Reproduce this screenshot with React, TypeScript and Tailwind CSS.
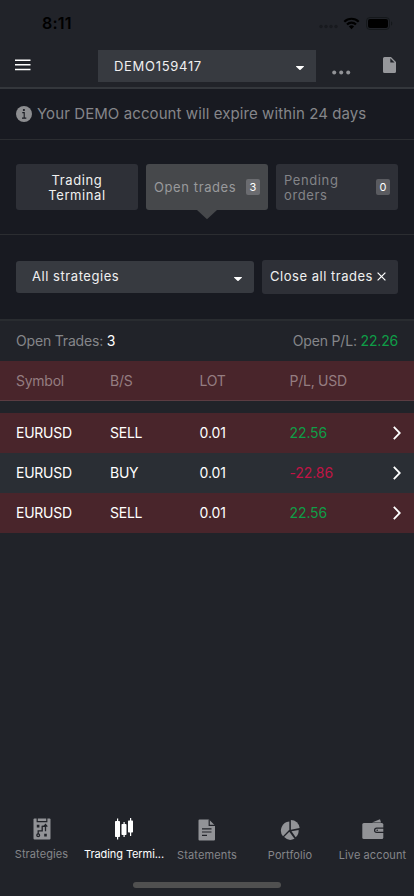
import React from 'react';

interface Trade {
  id: number;
  symbol: string;
  side: 'SELL' | 'BUY';
  lot: string;
  profit: string;
}

const trades: Trade[] = [
  { id: 1, symbol: 'EURUSD', side: 'SELL', lot: '0.01', profit: '22.56' },
  { id: 2, symbol: 'EURUSD', side: 'BUY', lot: '0.01', profit: '-22.86' },
  { id: 3, symbol: 'EURUSD', side: 'SELL', lot: '0.01', profit: '22.56' },
];

const Caret: React.FC = () => (
  <svg width="10" height="6" viewBox="0 0 10 6" fill="#fff">
    <path d="M1.500 1h7c.5 0 .6.500.3.800L5.600 4.700c-.4.400-.8.400-1.200 0L1.200 1.800C.9 1.500 1 1 1.500 1z" />
  </svg>
);

const StatusBar: React.FC = () => (
  <div className="h-[46px] flex items-center text-black">
    <span className="ml-[42px] w-[60px] text-[16px] leading-[46px] font-semibold tracking-[0.2px]">8:11</span>
    <svg className="ml-[217px] mt-[7px]" width="19" height="5" viewBox="0 0 19 5" fill="#181a1e">
      <circle cx="2" cy="2.500" r="1.700" />
      <circle cx="7" cy="2.500" r="1.700" />
      <circle cx="12" cy="2.500" r="1.700" />
      <circle cx="17" cy="2.500" r="1.700" />
    </svg>
    <svg className="ml-[5px]" width="17" height="13" viewBox="0 0 17 13">
      <g fill="none" stroke="#000" strokeWidth="2.200">
        <path d="M1.300 4.700a10.300 10.300 0 0 1 14.400 0" />
        <path d="M4 7.500a6.400 6.400 0 0 1 9 0" />
      </g>
      <path d="M8.500 12.200 5.900 9.600a3.700 3.700 0 0 1 5.200 0z" />
    </svg>
    <svg className="ml-[6px]" width="27" height="13" viewBox="0 0 27 13">
      <rect x=".5" y=".5" width="23" height="12" rx="3.500" fill="none" stroke="#15181b" />
      <rect x="2" y="2" width="20" height="9" rx="2" />
      <path d="M25 4.300c1.700.8 1.700 3.600 0 4.400z" fill="#15181b" />
    </svg>
  </div>
);

const Header: React.FC = () => (
  <div className="h-[43px] flex border-b-2 border-[#34373c]">
    <svg className="ml-[15px] mt-[13px]" width="16" height="12" viewBox="0 0 16 12" stroke="#fff" strokeWidth="1.500">
      <path d="M0 1.200h15.500M0 5.800h15.500M0 10.500h15.500" />
    </svg>
    <div className="ml-[67px] mt-[4px] w-[218px] h-[32px] pl-[16px] pr-[11px] flex items-center justify-between bg-[#373a40] text-[#f0f0f0] text-[13px] tracking-[0.7px]">
      <span className="mt-px">DEMO159417</span>
      <span className="mt-[4px]"><Caret /></span>
    </div>
    <svg className="ml-[16px] mt-[24px]" width="19" height="5" viewBox="0 0 19 5" fill="#929397">
      <circle cx="2.200" cy="2.600" r="2" />
      <circle cx="9.200" cy="2.600" r="2" />
      <circle cx="16.200" cy="2.600" r="2" />
    </svg>
    <svg className="ml-[32px] mt-[11px]" width="13" height="16" viewBox="0 0 13 16">
      <path d="M1.500 0H8l5 5v9.500a1.500 1.500 0 0 1-1.500 1.500h-10A1.500 1.500 0 0 1 0 14.500v-13A1.500 1.500 0 0 1 1.500 0z" fill="#96979b" />
      <path d="M7.300 1.300v4.200h4.300z" fill="#212329" />
    </svg>
  </div>
);

const Tabs: React.FC = () => (
  <div className="h-[95px] pt-[24px] px-[16px] flex gap-[8px] text-[13px] leading-[15px] tracking-[0.6px] border-b border-[#2b2d31]">
    <button className="w-[122px] h-[46px] pt-px rounded-[3px] bg-[#2e3037] text-[#f0f0f0] text-center">
      Trading<br />Terminal
    </button>
    <button className="relative w-[122px] h-[46px] px-[8px] rounded-[3px] bg-[#46484b] text-[#999a9c] flex items-center justify-between">
      <span className="whitespace-nowrap">Open trades</span>
      <span className="w-[14px] h-[16px] rounded-[2px] bg-[#6b6c70] text-white text-[11px] tracking-normal leading-[16px] text-center">3</span>
      <svg className="absolute left-[51px] top-[46px]" width="20" height="10" viewBox="0 0 20 10" fill="#46484b">
        <path d="M0 0h20L10 9.300z" />
      </svg>
    </button>
    <button className="w-[122px] h-[46px] px-[8px] rounded-[3px] bg-[#2e3037] text-[#838488] flex items-center justify-between text-left">
      <span className="mt-px">Pending<br />orders</span>
      <span className="w-[14px] h-[16px] rounded-[2px] bg-[#5a5b60] text-white text-[11px] tracking-normal leading-[16px] text-center">0</span>
    </button>
  </div>
);

const Filters: React.FC = () => (
  <div className="h-[86px] px-[16px] flex items-center gap-[8px] text-[13px] text-[#f0f0f0] border-b-2 border-[#292c30]">
    <div className="w-[238px] h-[32px] pl-[16px] pr-[11px] rounded-[3px] bg-[#373a40] flex items-center justify-between tracking-[0.55px]">
      <span>All strategies</span>
      <span className="mt-[4px]"><Caret /></span>
    </div>
    <button className="w-[136px] h-[34px] pl-[8px] rounded-[3px] bg-[#2e3037] flex items-center whitespace-nowrap tracking-[0.52px]">
      Close all trades
      <svg className="ml-[4px] -mt-px" width="9" height="9" viewBox="0 0 9 9" stroke="#fff" strokeWidth="1.200">
        <path d="M.6.600l7.800 7.800M8.400.6L.6 8.400" />
      </svg>
    </button>
  </div>
);

const TradeRow: React.FC<{ trade: Trade }> = ({ trade }) => (
  <div className={`h-[40px] pl-[16px] flex items-center text-white ${trade.side === 'SELL' ? 'bg-[#49252b]' : 'bg-[#2a2e34]'}`}>
    <span className="w-[94px] tracking-[-0.25px]">{trade.symbol}</span>
    <span className="w-[89.500px] tracking-[-0.25px]">{trade.side}</span>
    <span className="w-[90px]">{trade.lot}</span>
    <span className={`w-[103px] ${trade.profit.startsWith('-') ? 'text-[#c01445]' : 'text-[#0f9d47]'}`}>{trade.profit}</span>
    <svg width="8" height="14" viewBox="0 0 8 14" fill="none" stroke="#fff" strokeWidth="1.800">
      <path d="M.8.800l6 6.200-6 6.200" />
    </svg>
  </div>
);

const navItems = [
  {
    label: 'Strategies',
    box: 'w-[83px] pt-px tracking-[0.1px]',
    icon: (
      <svg width="18" height="22" viewBox="0 0 18 22">
        <rect x=".5" y=".5" width="17" height="21" rx="1" fill="#929397" />
        <path d="M4.200 0v3.700h9.600V0" fill="none" stroke="#212329" strokeWidth="1.200" />
        <g fill="none" stroke="#212329" strokeWidth="1.300">
          <path d="M5.200 16v-3.200h4V8.300h3.600" />
          <path d="M9.200 8.300h3.300v5M10.700 8.700l1.800-2.100 1.800 2.100" />
          <circle cx="5.200" cy="17.200" r="1.400" />
        </g>
        <path d="M3.800 6.800h2.600v2.600H3.800zM11.200 15.800h2.600v2.600h-2.600z" fill="#212329" />
      </svg>
    ),
  },
  {
    label: 'Trading Termi...',
    box: 'w-[82px] pt-px text-white tracking-[-0.08px]',
    icon: (
      <svg width="18" height="22" viewBox="0 0 18 22" fill="#fff">
        <rect y="3" width="5" height="16" rx=".7" />
        <rect x="2" y=".5" width="1.200" height="21" />
        <rect x="6.500" y="6" width="5" height="11" rx=".7" />
        <rect x="8.500" y="4" width="1.200" height="15" />
        <rect x="13" y="2.500" width="5" height="12" rx=".7" />
        <rect x="15" y="0" width="1.200" height="18" />
      </svg>
    ),
  },
  {
    label: 'Statements',
    box: 'w-[84px] pt-[2px] tracking-[0.15px]',
    icon: (
      <svg width="18" height="22" viewBox="0 0 18 22">
        <path d="M1.500.5H11L17 6.500v14a1 1 0 0 1-1 1H1.500a1 1 0 0 1-1-1v-19a1 1 0 0 1 1-1z" fill="#929397" />
        <path d="M11.200.5v5.800H17M4 9.800h9.500M4 13h9.500M4 16.300h5" fill="none" stroke="#212329" strokeWidth="1.200" />
      </svg>
    ),
  },
  {
    label: 'Portfolio',
    box: 'w-[82px] pt-[2px] tracking-[0.1px]',
    icon: (
      <svg width="20" height="22" viewBox="0 0 20 22" fill="#929397">
        <path d="M9.300 2.500v8.300L3 17.200A9 9 0 0 1 9.300 2.500z" />
        <path d="M10.900 1a8.800 8.800 0 0 1 8.700 8l-8.700 1.700z" />
        <path d="M9.300 12.800l5.200 7a9 9 0 0 1-10.400-1.700z" />
        <path d="M11.500 12.200l7.100-1.300a9 9 0 0 1-2.900 7.400z" />
      </svg>
    ),
  },
  {
    label: 'Live account',
    box: 'w-[83px] pt-[2px] tracking-[0.1px]',
    icon: (
      <svg width="22" height="22" viewBox="0 0 22 22">
        <path d="M10 3.500 18 .2l1 3.300z" fill="#929397" />
        <rect x=".3" y="4" width="21" height="16" rx="1.500" fill="#929397" />
        <path d="M22 8.600h-7.300a2.700 2.700 0 0 0 0 5.400H22z" fill="#212329" />
        <path d="M21.300 9.800h-6.600a1.500 1.500 0 0 0 0 3h6.600z" fill="#929397" />
        <circle cx="15.200" cy="11.300" r=".8" fill="#212329" />
      </svg>
    ),
  },
];

const BottomNav: React.FC = () => (
  <div className="h-[65px] flex text-[11px] leading-[14px] text-[#85868a]">
    {navItems.map((item) => (
      <div key={item.label} className={`shrink-0 flex flex-col items-center gap-[7px] whitespace-nowrap ${item.box}`}>
        {item.icon}
        <span>{item.label}</span>
      </div>
    ))}
  </div>
);

const App: React.FC = () => {
  return (
    <div className="w-[414px] h-[896px] overflow-hidden flex flex-col bg-[#212329] font-[Inter,'Liberation_Sans',sans-serif]">
      <StatusBar />
      <Header />

      <div className="bg-[#181a21]">
        {/* Expiry notice */}
        <div className="h-[51px] pl-[16px] flex items-center border-b border-[#2b2d31] text-[#85868a] text-[15px] tracking-[0.09px]">
          <svg className="mr-[5px]" width="16" height="16" viewBox="0 0 16 16">
            <circle cx="8" cy="8" r="8" fill="#8d8e91" />
            <circle cx="7.900" cy="4" r="1.100" fill="#181a21" />
            <path d="M6.300 6.600h1.900v5.200M6 12.100h4.300" fill="none" stroke="#181a21" strokeWidth="1.100" />
          </svg>
          <span className="whitespace-nowrap">Your DEMO account will expire within 24 days</span>
        </div>
        <Tabs />
        <Filters />
      </div>

      {/* Trades */}
      <div className="text-[14px] leading-[18px] tracking-[-0.1px]">
        <div className="h-[40px] px-[16px] flex items-center justify-between text-[#85868a] tracking-[-0.18px]">
          <span>Open Trades: <span className="text-white">3</span></span>
          <span>Open P/L: <span className="text-[#0f9d47]">22.26</span></span>
        </div>
        <div className="h-[40px] pl-[16px] flex items-center bg-[#49252b] text-[#957d81] border-b border-[#5b3c42] tracking-[-0.25px]">
          <span className="w-[94px]">Symbol</span>
          <span className="w-[89.500px]">B/S</span>
          <span className="w-[90px]">LOT</span>
          <span>P/L, USD</span>
        </div>
        <div className="mt-[12px]">
          {trades.map((trade) => (
            <TradeRow key={trade.id} trade={trade} />
          ))}
        </div>
      </div>

      <div className="mt-auto">
        <BottomNav />
        <div className="mx-auto mb-[8px] w-[148px] h-[6px] rounded-full bg-[#505050]" />
      </div>
    </div>
  );
};

export default App;
